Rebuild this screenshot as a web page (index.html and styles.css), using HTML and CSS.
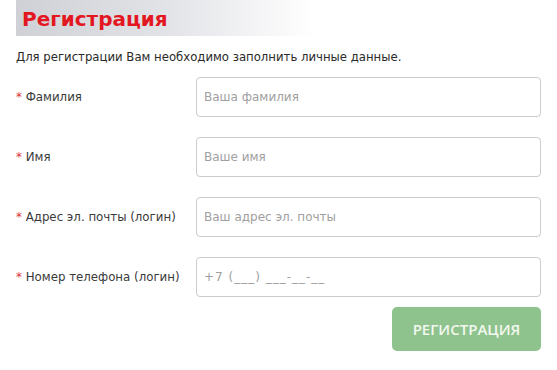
FILE: index.html
```html
<!DOCTYPE html>
<html lang="ru">
<head>
  <meta charset="UTF-8">
  <title>Регистрация</title>
  <link rel="stylesheet" href="styles.css">
</head>
<body>
  <div class="page">
    <h1 class="title">Регистрация</h1>
    <p class="intro">Для регистрации Вам необходимо заполнить личные данные.</p>

    <form class="reg-form">
      <div class="row">
        <label class="label"><span class="req">*</span> Фамилия</label>
        <input class="field" type="text" placeholder="Ваша фамилия">
      </div>
      <div class="row">
        <label class="label"><span class="req">*</span> Имя</label>
        <input class="field" type="text" placeholder="Ваше имя">
      </div>
      <div class="row">
        <label class="label"><span class="req">*</span> Адрес эл. почты (логин)</label>
        <input class="field" type="text" placeholder="Ваш адрес эл. почты">
      </div>
      <div class="row">
        <label class="label"><span class="req">*</span> Номер телефона (логин)</label>
        <input class="field field-phone" type="text" placeholder="+7 (___) ___-__-__">
      </div>
      <div class="actions">
        <button class="submit" type="button">РЕГИСТРАЦИЯ</button>
      </div>
    </form>
  </div>
</body>
</html>
```

FILE: styles.css
```css
body {
  margin: 0;
  background: #fff;
  color: #333;
  font-family: 'DejaVu Sans', Verdana, sans-serif;
}

.page {
  padding: 0 16px;
  width: 525px;
}

.title {
  margin: 0;
  width: 293px;
  height: 36px;
  padding-left: 6px;
  line-height: 38px;
  font-size: 20px;
  font-weight: bold;
  color: #e3171f;
  background: linear-gradient(to right, #d0d1d6 0%, #e2e3e7 50%, #ffffff 100%);
}

.intro {
  margin: 13px 0 0;
  font-size: 11.7px;
  line-height: 16px;
  color: #2a2a2a;
}

.reg-form {
  margin-top: 12px;
}

.row {
  display: flex;
  align-items: center;
  height: 40px;
  margin-bottom: 20px;
}

.label {
  width: 180px;
  font-size: 11.8px;
  color: #3a3a3a;
}

.req {
  color: #d9343a;
}

.field {
  box-sizing: border-box;
  width: 345px;
  height: 40px;
  padding: 0 7px;
  border: 1px solid #cccccc;
  border-radius: 4px;
  font-family: 'DejaVu Sans', Verdana, sans-serif;
  font-size: 12px;
  color: #333;
}

.field::placeholder {
  color: #a0a0a0;
}

.field-phone::placeholder {
  letter-spacing: 1px;
}

.actions {
  display: flex;
  justify-content: flex-end;
  margin-top: -10px;
}

.submit {
  width: 149px;
  height: 44px;
  border: none;
  border-radius: 5px;
  background: #8fc38d;
  color: #f2f8ef;
  font-family: 'Open Sans', sans-serif;
  font-size: 15px;
  font-weight: 600;
  cursor: pointer;
}
```
